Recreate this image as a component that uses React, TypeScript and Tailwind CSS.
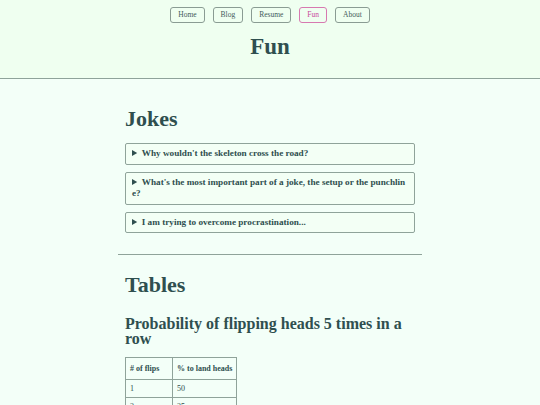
import { useState } from 'react'

// Fun page: nav pills, page title, jokes in <details>, probability table.

const nav = ['Home', 'Blog', 'Resume', 'Fun', 'About']

const jokes = [
  "Why wouldn't the skeleton cross the road?",
  "What's the most important part of a joke, the setup or the punchline?",
  'I am trying to overcome procrastination...',
]

const rows = [
  ['1', '50'],
  ['2', '25'],
  ['3', '12.5'],
  ['4', '6.25'],
  ['5', '3.125'],
]

export default function App() {
  const [open, setOpen] = useState<number | null>(null)
  const cell = 'border border-[#8fa39a] text-left text-[#2f4f4f] px-[4px] whitespace-nowrap'
  return (
    <div className="min-h-screen bg-[#f3fff8] text-[#2f4f4f] font-['Liberation_Serif',serif]">
      <header className="bg-[#effff0] border-b border-[#8fa39a] pt-[7px] pb-[20px]">
        <nav className="flex justify-center gap-[8px]">
          {nav.map(n => (
            <a key={n} href="#"
              className={`px-[7px] h-[16px] flex items-center rounded-[3px] border text-[7.5px] ${n === 'Fun' ? 'border-[#d779b0] text-[#c9489a]' : 'border-[#8a9c93] text-[#3f5b5b]'}`}>
              {n}
            </a>
          ))}
        </nav>
        <h1 className="text-center font-bold text-[23px] leading-none mt-[12px]">Fun</h1>
      </header>

      <main className="w-[304px] mx-auto">
        <section className="px-[7px] pt-[29px] pb-[21px]">
          <h2 className="font-bold text-[22px] leading-none">Jokes</h2>
          <div className="flex flex-col gap-[7px] mt-[13px]">
            {jokes.map((j, i) => (
              <details key={i} open={open === i} onToggle={e => { if ((e.target as HTMLDetailsElement).open) setOpen(i) }}
                className="border border-[#8fa39a] rounded-[2px] px-[6px] py-[4px] bg-[#f3fff5]">
                <summary className="font-bold text-[9.2px] leading-[11.5px] cursor-pointer break-all">{j}</summary>
              </details>
            ))}
          </div>
        </section>

        <hr className="border-t border-[#8fa39a]" />

        <section className="px-[7px] pt-[19px]">
          <h2 className="font-bold text-[22px] leading-none">Tables</h2>
          <h3 className="font-bold text-[16px] leading-[15px] mt-[20px]">Probability of flipping heads 5 times in a row</h3>
          <table className="mt-[11px] border-collapse text-[8px]">
            <thead>
              <tr>
                <th className={`${cell} font-bold h-[22px] w-[47px]`}># of flips</th>
                <th className={`${cell} font-bold h-[22px] w-[64px]`}>% to land heads</th>
              </tr>
            </thead>
            <tbody>
              {rows.map(r => (
                <tr key={r[0]}>
                  <td className={`${cell} font-normal h-[18px]`}>{r[0]}</td>
                  <td className={`${cell} font-normal h-[18px]`}>{r[1]}</td>
                </tr>
              ))}
            </tbody>
          </table>
        </section>
      </main>
    </div>
  )
}
